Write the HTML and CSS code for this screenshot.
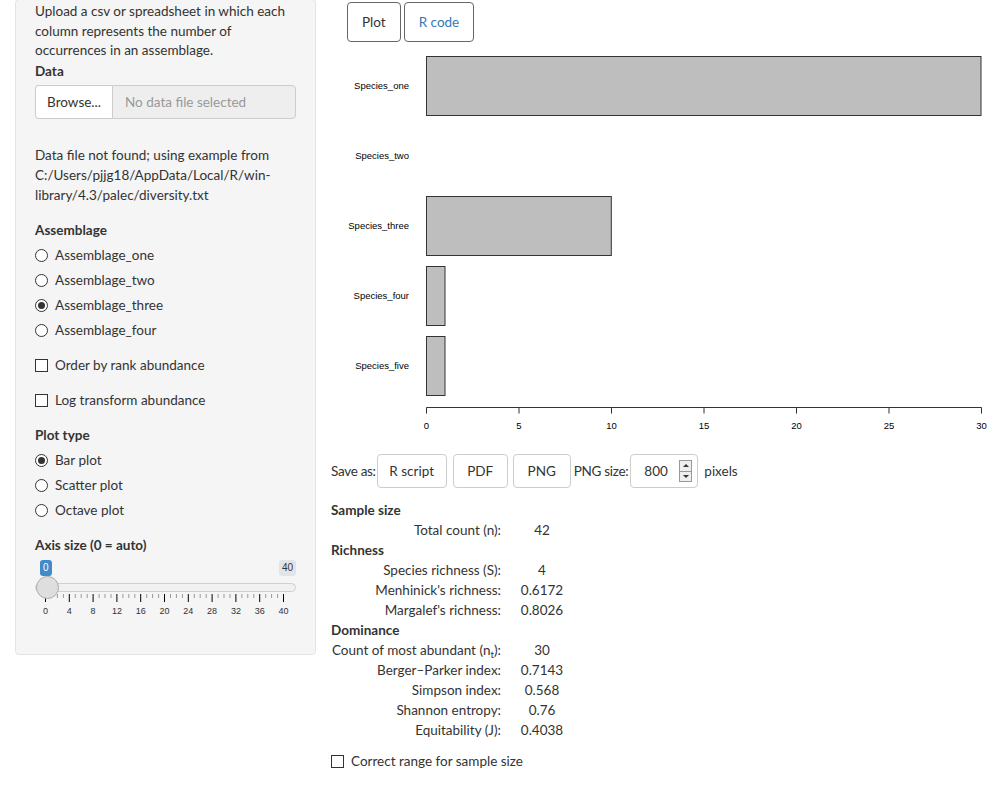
FILE: index.html
```html
<!DOCTYPE html>
<html>
<head>
<meta charset="utf-8">
<link rel="stylesheet" href="styles.css">
</head>
<body>
<div class="page">
  <aside class="well">
    <p class="intro">Upload a csv or spreadsheet in which each column represents the number of occurrences in an assemblage.</p>
    <div class="label">Data</div>
    <div class="file">
      <span class="browse">Browse...</span>
      <span class="fname">No data file selected</span>
    </div>
    <p class="note">Data file not found; using example from C:/Users/pjjg18/AppData/Local/R/win-library/4.3/palec/diversity.txt</p>
    <div class="label sec">Assemblage</div>
    <div class="radios">
      <div class="opt"><span class="radio"></span>Assemblage_one</div>
      <div class="opt"><span class="radio"></span>Assemblage_two</div>
      <div class="opt"><span class="radio on"></span>Assemblage_three</div>
      <div class="opt"><span class="radio"></span>Assemblage_four</div>
    </div>
    <div class="check c1"><span class="box"></span>Order by rank abundance</div>
    <div class="check c2"><span class="box"></span>Log transform abundance</div>
    <div class="label sec2">Plot type</div>
    <div class="radios">
      <div class="opt"><span class="radio on"></span>Bar plot</div>
      <div class="opt"><span class="radio"></span>Scatter plot</div>
      <div class="opt"><span class="radio"></span>Octave plot</div>
    </div>
    <div class="label sec3">Axis size (0 = auto)</div>
    <div class="slider">
      <div class="minmax"><span class="from">0</span><span class="to">40</span></div>
      <div class="track"><span class="handle"></span></div>
      <svg class="grid" width="262" height="24" viewBox="0 0 262 24">
        <g stroke="#000" stroke-width="1">
          <path d="M11.5 0v8M35.3 0v8M59.1 0v8M82.9 0v8M106.7 0v8M130.5 0v8M154.3 0v8M178.1 0v8M201.9 0v8M225.7 0v8M249.5 0v8"/>
          <path d="M17.5 0v4M23.4 0v4M29.4 0v4M41.3 0v4M47.2 0v4M53.2 0v4M65.1 0v4M71 0v4M77 0v4M88.9 0v4M94.8 0v4M100.8 0v4M112.7 0v4M118.6 0v4M124.6 0v4M136.5 0v4M142.4 0v4M148.4 0v4M160.3 0v4M166.2 0v4M172.2 0v4M184.1 0v4M190 0v4M196 0v4M207.9 0v4M213.8 0v4M219.8 0v4M231.7 0v4M237.6 0v4M243.6 0v4" stroke="#999"/>
        </g>
        <g class="gl" text-anchor="middle">
          <text x="11.5" y="20">0</text><text x="35.3" y="20">4</text><text x="59.1" y="20">8</text><text x="82.9" y="20">12</text><text x="106.7" y="20">16</text><text x="130.5" y="20">20</text><text x="154.3" y="20">24</text><text x="178.1" y="20">28</text><text x="201.9" y="20">32</text><text x="225.7" y="20">36</text><text x="249.5" y="20">40</text>
        </g>
      </svg>
    </div>
  </aside>
  <main class="main">
    <div class="tabs">
      <span class="tab active">Plot</span>
      <span class="tab link">R code</span>
    </div>
    <svg class="plot" width="661" height="392" viewBox="331 48 661 392">
      <g fill="#bebebe" stroke="#333" stroke-width="1">
        <rect x="426.5" y="56.5" width="554.5" height="59"/>
        <rect x="426.5" y="196.5" width="184.8" height="59"/>
        <rect x="426.5" y="266.5" width="18.5" height="59"/>
        <rect x="426.5" y="336.5" width="18.5" height="59"/>
      </g>
      <g class="yl" text-anchor="end">
        <text x="409" y="89">Species_one</text>
        <text x="409" y="159">Species_two</text>
        <text x="409" y="229">Species_three</text>
        <text x="409" y="299">Species_four</text>
        <text x="409" y="369">Species_five</text>
      </g>
      <path d="M426.5 407.5H981.5M426.5 407.5v6M519 407.5v6M611.5 407.5v6M704 407.5v6M796.5 407.5v6M889 407.5v6M981.5 407.5v6" stroke="#333" fill="none"/>
      <g class="xl" text-anchor="middle">
        <text x="426.5" y="429">0</text>
        <text x="519" y="429">5</text>
        <text x="611.5" y="429">10</text>
        <text x="704" y="429">15</text>
        <text x="796.5" y="429">20</text>
        <text x="889" y="429">25</text>
        <text x="981.5" y="429">30</text>
      </g>
    </svg>
    <div class="save">
      <span class="savelbl">Save as:</span>
      <span class="btn b1">R script</span>
      <span class="btn b2">PDF</span>
      <span class="btn b3">PNG</span>
      <span class="pngsz">PNG size:</span>
      <span class="num">800<span class="spin"><span class="up"></span><span class="dn"></span></span></span>
      <span class="px">pixels</span>
    </div>
    <div class="stats">
      <div class="h">Sample size</div>
      <div class="k">Total count (n):</div><div class="v">42</div>
      <div class="h">Richness</div>
      <div class="k">Species richness (S):</div><div class="v">4</div>
      <div class="k">Menhinick's richness:</div><div class="v">0.6172</div>
      <div class="k">Margalef's richness:</div><div class="v">0.8026</div>
      <div class="h">Dominance</div>
      <div class="k">Count of most abundant (n<sub>t</sub>):</div><div class="v">30</div>
      <div class="k">Berger–Parker index:</div><div class="v">0.7143</div>
      <div class="k">Simpson index:</div><div class="v">0.568</div>
      <div class="k">Shannon entropy:</div><div class="v">0.76</div>
      <div class="k">Equitability (J):</div><div class="v">0.4038</div>
    </div>
    <div class="check c3"><span class="box"></span>Correct range for sample size</div>
  </main>
</div>
</body>
</html>
```
FILE: styles.css
```css
* { box-sizing: border-box; }
html, body { margin: 0; padding: 0; background: #fff; }
body {
  font-family: Lato, "Open Sans", sans-serif;
  font-size: 13.5px;
  line-height: 20px;
  color: #333;
}
.page { display: flex; align-items: flex-start; }
.well {
  margin-left: 15px;
  width: 301px;
  height: 656px;
  margin-top: -1px;
  background: #f5f5f5;
  border: 1px solid #e3e3e3;
  border-radius: 4px;
  padding: 2px 19px 0 19px;
}
.intro { margin: 0; line-height: 19.7px; }
.label { font-weight: bold; margin-top: 0; }
.file { display: flex; margin-top: 4px; height: 34px; }
.browse {
  width: 77px; border: 1px solid #ccc; border-right: none; background: #fff;
  border-radius: 4px 0 0 4px; display: flex; align-items: center; justify-content: center; color: #333;
}
.fname {
  flex: 1; border: 1px solid #ccc; background: #eee; border-radius: 0 4px 4px 0;
  color: #999; display: flex; align-items: center; padding-left: 12px;
}
.note { margin: 26px 0 0; }
.sec { margin-top: 15px; }
.radios { margin-top: 5px; }
.opt, .check { display: flex; align-items: center; height: 20px; }
.opt + .opt { margin-top: 5px; }
.radio {
  width: 13px; height: 13px; border: 1px solid #333; border-radius: 50%; margin-right: 7px; background: #fff;
  display: inline-flex; align-items: center; justify-content: center;
}
.radio.on::after { content: ""; width: 7px; height: 7px; border-radius: 50%; background: #333; }
.box { width: 13px; height: 13px; border: 1px solid #333; margin-right: 7px; background: #fff; }
.c1 { margin-top: 15px; }
.c2 { margin-top: 15px; }
.sec2 { margin-top: 15px; }
.sec3 { margin-top: 15px; }
.slider { margin-top: 5px; position: relative; }
.minmax { display: flex; justify-content: space-between; height: 16px; font-family: Arial, "Liberation Sans", sans-serif; font-size: 10px; line-height: 15px; }
.from { background: #428bca; color: #fff; border-radius: 3px; padding: 0 3px; margin-left: 5px; }
.to { background: #e1e4e9; color: #333; border-radius: 3px; padding: 0 3px; }
.track { margin-top: 7px; height: 9px; background: #f1f1f1; border: 1px solid #cfcfcf; border-radius: 5px; position: relative; }
.handle {
  position: absolute; left: 0; top: -8px; width: 23px; height: 23px; border-radius: 50%;
  background: #dedede; border: 1px solid #ababab;
}
.grid { display: block; margin-top: 2px; margin-left: -1px; }
.gl text { font-family: Arial, "Liberation Sans", sans-serif; font-size: 9px; fill: #333; }

.main { margin-left: 15px; flex: 1; }
.tabs { display: flex; gap: 3px; margin-top: 2px; margin-left: 16px; }
.tab {
  height: 40px; border: 1px solid #666; border-radius: 4px; display: flex; align-items: center; padding: 0 14px;
}
.tab.active { color: #333; }
.tab.link { color: #337ab7; }
.plot { display: block; margin-top: 6px; }
.yl text { font-family: Arial, "Liberation Sans", sans-serif; font-size: 9.5px; fill: #000; }
.xl text { font-family: Arial, "Liberation Sans", sans-serif; font-size: 9.5px; fill: #000; }
.save { display: flex; align-items: center; height: 34px; margin-top: 14px; }
.savelbl { letter-spacing: -0.3px; }
.btn {
  height: 34px; border: 1px solid #ccc; border-radius: 4px; display: flex; align-items: center; justify-content: center;
}
.b1 { width: 70px; margin-left: 1px; }
.b2 { width: 55px; margin-left: 6px; }
.b3 { width: 58px; margin-left: 5px; }
.pngsz { margin-left: 3px; letter-spacing: -0.3px; }
.num {
  margin-left: 2px; width: 68px; height: 34px; border: 1px solid #ccc; border-radius: 4px;
  display: flex; align-items: center; padding-left: 13px; position: relative;
}
.spin { position: absolute; right: 5px; top: 5px; width: 13px; height: 22px; display: flex; flex-direction: column; border: 1px solid #999; background: #eee; }
.spin .up, .spin .dn { flex: 1; position: relative; }
.spin .up { border-bottom: 1px solid #999; }
.spin .up::after { content: ""; position: absolute; left: 3px; top: 3px; border: 3px solid transparent; border-bottom: 3px solid #333; border-top: 0; }
.spin .dn::after { content: ""; position: absolute; left: 3px; top: 3px; border: 3px solid transparent; border-top: 3px solid #333; border-bottom: 0; }
.px { margin-left: 6px; }
.stats { display: grid; grid-template-columns: 170px 82px; margin-top: 12px; }
.stats .h { grid-column: 1 / 3; font-weight: bold; }
.stats .k { text-align: right; }
.stats .v { text-align: center; }
sub { font-size: 10px; line-height: 0; vertical-align: -3px; }
.c3 { margin-top: 11px; }
```
